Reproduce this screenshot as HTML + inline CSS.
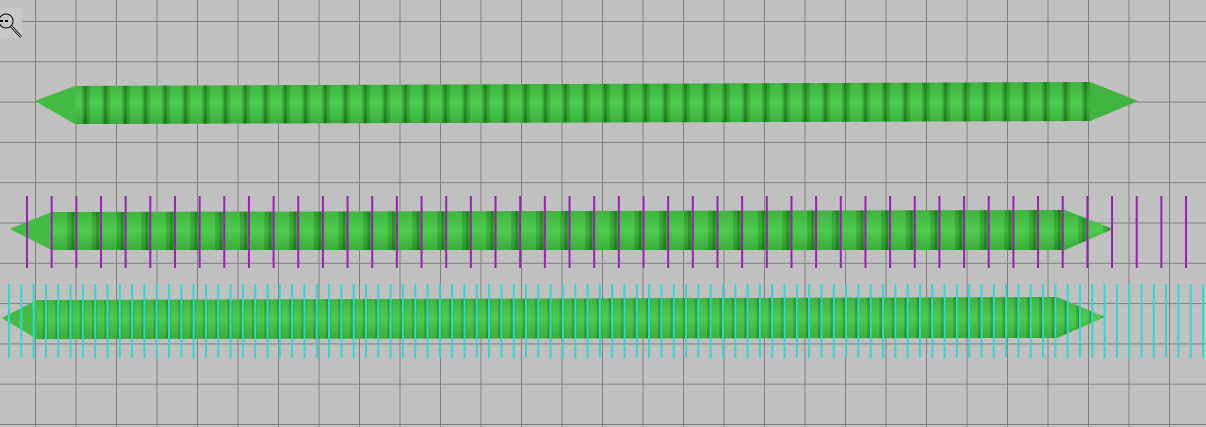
<!DOCTYPE html><html><head><style>html,body{margin:0;padding:0;background:#c0c0c0;}svg{display:block}</style></head><body>
<svg width="1206" height="427" xmlns="http://www.w3.org/2000/svg">
<defs>
<pattern id="grid" x="35" y="21" width="40.5" height="40.3" patternUnits="userSpaceOnUse">
<rect width="40.5" height="40.3" fill="#c0c0c0"/>
<path d="M0 0H40.5M0 0V40.3" stroke="#808080" stroke-width="2" fill="none"/>
</pattern>
<linearGradient id="v" x1="0" y1="0" x2="0" y2="1">
<stop offset="0" stop-color="#2a8a2a"/><stop offset="0.5" stop-color="#55d055"/><stop offset="1" stop-color="#207a20"/>
</linearGradient>
<pattern id="s1" x="0" y="0" width="20" height="10" patternUnits="userSpaceOnUse">
<rect width="20" height="10" fill="#4ac84a"/><rect x="2" width="8" height="10" fill="#2a962a" opacity="0.8"/><rect x="4" width="3" height="10" fill="#176e17" opacity="0.8"/>
</pattern>
<pattern id="s2" x="2" y="0" width="24.66" height="10" patternUnits="userSpaceOnUse">
<rect width="24.66" height="10" fill="#4ac84a"/><rect x="16" width="9" height="10" fill="#2a962a" opacity="0.8"/><rect x="20" width="3" height="10" fill="#176e17" opacity="0.8"/>
</pattern>
<pattern id="s3" x="3" y="0" width="12.3" height="10" patternUnits="userSpaceOnUse">
<rect width="12.3" height="10" fill="#4ac84a"/><rect x="3" width="5" height="10" fill="#2a962a" opacity="0.8"/><rect x="5" width="1.5" height="10" fill="#176e17" opacity="0.7"/>
</pattern>
<pattern id="pl" x="26" y="0" width="24.66" height="427" patternUnits="userSpaceOnUse">
<rect x="0" y="196" width="2" height="72" fill="#9a20b0"/>
</pattern>
<pattern id="cl" x="8" y="0" width="12.31" height="427" patternUnits="userSpaceOnUse">
<rect x="0" y="284" width="2" height="74" fill="#30d8d0"/>
</pattern>
</defs>
<rect width="1206" height="427" fill="url(#grid)"/>
<!-- bar 1 -->
<polygon points="35,101 75,86 1090,82 1138,101 1090,121 75,124" fill="url(#s1)"/>
<polygon points="35,101 75,86 1090,82 1138,101 1090,121 75,124" fill="url(#v)" opacity="0.35"/>
<polygon points="35,101 75,86 75,124" fill="#44bb44"/>
<polygon points="1090,82 1138,101 1090,121" fill="#3fb53f"/>
<!-- bar 2 -->
<polygon points="10,229 52,212 1065,210 1113,229 1065,250 52,250" fill="url(#s2)"/>
<polygon points="10,229 52,212 1065,210 1113,229 1065,250 52,250" fill="url(#v)" opacity="0.35"/>
<polygon points="10,229 52,212 52,250" fill="#44bb44"/>
<rect x="20" y="196" width="1170" height="72" fill="url(#pl)"/>
<!-- bar 3 -->
<polygon points="2,318 37,300 1057,297 1105,317 1057,338 37,339" fill="url(#s3)"/>
<polygon points="2,318 37,300 1057,297 1105,317 1057,338 37,339" fill="url(#v)" opacity="0.35"/>
<polygon points="2,318 37,300 37,339" fill="#44bb44"/>
<rect x="0" y="284" width="1206" height="74" fill="url(#cl)"/>
<!-- magnifier icon -->
<rect x="0" y="8" width="22" height="30" fill="#c8c8c8"/>
<circle cx="6" cy="21" r="7" fill="none" stroke="#000" stroke-width="1"/>
<path d="M0 21H10" stroke="#000" stroke-width="2" stroke-dasharray="3 2"/>
<path d="M11 26L21 37" stroke="#000" stroke-width="2.5"/>
<path d="M11 26L21 37" stroke="#fff" stroke-width="0.8"/>
</svg>
</body></html>
